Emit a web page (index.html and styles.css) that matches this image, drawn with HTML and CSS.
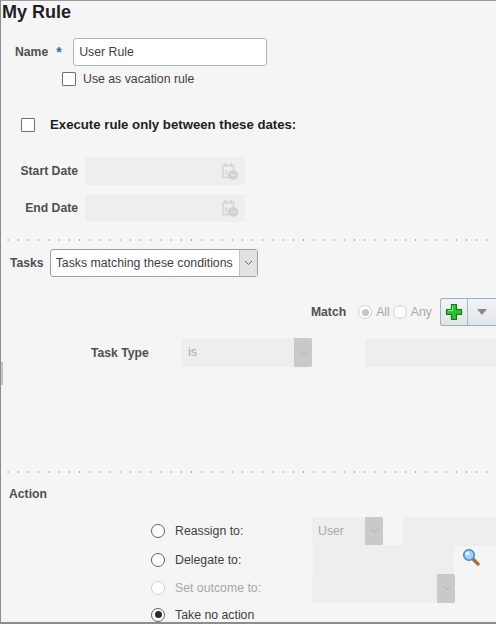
FILE: index.html
```html
<!DOCTYPE html>
<html lang="en">
<head>
    <meta charset="UTF-8">
    <meta name="viewport" content="width=device-width, initial-scale=1.0">
    <title>My Rule</title>
    <link rel="stylesheet" href="styles.css">
</head>
<body>
    <div class="frame">
        <div class="splitter-handle"></div>
        <h1>My Rule</h1>

        <div class="name-row">
            <label class="field-label" for="ruleName">Name</label>
            <span class="required">*</span>
            <input class="text-input" id="ruleName" type="text" value="User Rule">
        </div>
        <label class="vacation-row">
            <input type="checkbox" class="check">
            <span>Use as vacation rule</span>
        </label>

        <label class="dates-toggle">
            <input type="checkbox" class="check">
            <span>Execute rule only between these dates:</span>
        </label>

        <div class="date-row">
            <span class="field-label date-label">Start Date</span>
            <div class="date-input">
                <svg class="cal-icon" width="18" height="18" viewBox="0 0 18 18">
                    <path d="M2 3.500h10.500v6h-3a4 4 0 0 0-1.500 6H2z" fill="none" stroke="#d4d4d6" stroke-width="1.500"/>
                    <path d="M4.500 1v4M10 1v4" stroke="#d4d4d6" stroke-width="1.800"/>
                    <path d="M5 8v5" stroke="#d4d4d6" stroke-width="1.500"/>
                    <circle cx="12.500" cy="13" r="4.800" fill="#d2d2d4"/>
                    <path d="M10 12.500l2.800 1.200 2.400-1" fill="none" stroke="#eeeeef" stroke-width="1"/>
                </svg>
            </div>
        </div>
        <div class="date-row">
            <span class="field-label date-label">End Date</span>
            <div class="date-input">
                <svg class="cal-icon" width="18" height="18" viewBox="0 0 18 18">
                    <path d="M2 3.500h10.500v6h-3a4 4 0 0 0-1.500 6H2z" fill="none" stroke="#d4d4d6" stroke-width="1.500"/>
                    <path d="M4.500 1v4M10 1v4" stroke="#d4d4d6" stroke-width="1.800"/>
                    <path d="M5 8v5" stroke="#d4d4d6" stroke-width="1.500"/>
                    <circle cx="12.500" cy="13" r="4.800" fill="#d2d2d4"/>
                    <path d="M10 12.500l2.800 1.200 2.400-1" fill="none" stroke="#eeeeef" stroke-width="1"/>
                </svg>
            </div>
        </div>

        <div class="dots dots-tasks"></div>

        <div class="tasks-row">
            <span class="field-label">Tasks</span>
            <div class="select">
                <span class="select-text">Tasks matching these conditions</span>
                <span class="select-arrow">
                    <svg width="9" height="6" viewBox="0 0 9 6"><path d="M1 1l3.500 3.500L8 1" fill="none" stroke="#666" stroke-width="1"/></svg>
                </span>
            </div>
        </div>

        <div class="match-row">
            <span class="field-label">Match</span>
            <input type="radio" class="radio radio-off" name="match" checked disabled>
            <span class="muted">All</span>
            <input type="radio" class="radio radio-off" name="match" disabled>
            <span class="muted">Any</span>
            <div class="add-button">
                <span class="add-plus">
                    <svg width="18" height="18" viewBox="0 0 18 18">
                        <path d="M6.500 1.500h5v5h5v5h-5v5h-5v-5h-5v-5h5z" fill="#2fc12f" stroke="#0e7d14" stroke-width="1.200" stroke-linejoin="round"/>
                        <path d="M7.500 3v4.500H3" fill="none" stroke="#9cf09a" stroke-width="1"/>
                    </svg>
                </span>
                <span class="add-menu">
                    <svg width="10" height="6" viewBox="0 0 10 6"><path d="M0 0h10L5 6z" fill="#8a8a8a"/></svg>
                </span>
            </div>
        </div>

        <div class="condition-row">
            <span class="field-label condition-label">Task Type</span>
            <div class="disabled-select condition-select">
                <span>is</span>
                <span class="disabled-arrow">
                    <svg width="9" height="6" viewBox="0 0 9 6"><path d="M1 1l3.500 3.500L8 1" fill="none" stroke="#b0b0b0" stroke-width="1"/></svg>
                </span>
            </div>
            <div class="blank-input condition-value"></div>
        </div>

        <div class="dots dots-action"></div>

        <div class="field-label action-title">Action</div>

        <div class="action-grid">
            <label class="action-option">
                <input type="radio" class="radio" name="action">
                <span>Reassign to:</span>
            </label>
            <div class="action-controls">
                <div class="disabled-select user-select">
                    <span>User</span>
                    <span class="disabled-arrow">
                        <svg width="9" height="6" viewBox="0 0 9 6"><path d="M1 1l3.500 3.500L8 1" fill="none" stroke="#b0b0b0" stroke-width="1"/></svg>
                    </span>
                </div>
                <div class="blank-input user-value"></div>
            </div>

            <label class="action-option">
                <input type="radio" class="radio" name="action">
                <span>Delegate to:</span>
            </label>
            <div class="action-controls">
                <div class="blank-input delegate-value"></div>
                <svg class="search-icon" width="18" height="18" viewBox="0 0 18 18">
                    <path d="M10.500 10.500l5.500 5.500" stroke="#a8703f" stroke-width="3.400" stroke-linecap="round"/>
                    <circle cx="7" cy="7" r="5.300" fill="#a4d0f5" stroke="#3f88d0" stroke-width="1.500"/>
                    <circle cx="5.500" cy="5.500" r="2" fill="#e4f3ff"/>
                </svg>
            </div>

            <label class="action-option option-disabled">
                <input type="radio" class="radio radio-off" name="action" disabled>
                <span>Set outcome to:</span>
            </label>
            <div class="action-controls">
                <div class="disabled-select outcome-select">
                    <span></span>
                    <span class="disabled-arrow">
                        <svg width="9" height="6" viewBox="0 0 9 6"><path d="M1 1l3.500 3.500L8 1" fill="none" stroke="#b0b0b0" stroke-width="1"/></svg>
                    </span>
                </div>
            </div>

            <label class="action-option">
                <input type="radio" class="radio" name="action" checked>
                <span>Take no action</span>
            </label>
        </div>
    </div>
</body>
</html>
```

FILE: styles.css
```css
html, body {
    margin: 0;
    padding: 0;
}
body {
    font-family: "Liberation Sans", Arial, sans-serif;
    font-size: 12.3px;
    color: #3f3f3f;
    background-color: #f5f5f5;
}
.frame {
    position: relative;
    box-sizing: border-box;
    height: 624px;
    overflow: hidden;
    background: #f5f5f5;
    border-top: 1px solid #9c9c9c;
    border-left: 1px solid #8c8c8c;
    border-bottom: 2px solid #8c8c8c;
}
.splitter-handle {
    position: absolute;
    left: -1px;
    top: 361px;
    width: 3px;
    height: 23px;
    background: #b9c4cf;
}
h1 {
    margin: 0;
    padding-top: 1px;
    padding-left: 1px;
    font-size: 18px;
    line-height: 21px;
    color: #1f1f1f;
}
.field-label {
    font-weight: bold;
    font-size: 12.200px;
    color: #4f4f4f;
}
.muted {
    color: #a8a8a8;
}

/* name + vacation */
.name-row {
    display: flex;
    align-items: center;
    margin-top: 15px;
    padding-left: 14px;
}
.required {
    width: 17px;
    margin-left: 8px;
    font-size: 14px;
    font-weight: bold;
    color: #2d6ea8;
}
.text-input {
    box-sizing: border-box;
    width: 194px;
    height: 28px;
    padding: 0 5px;
    font: inherit;
    color: #3f3f3f;
    background: #fff;
    border: 1px solid #a9b8c8;
    border-radius: 3px;
}
.vacation-row {
    display: flex;
    align-items: center;
    gap: 7px;
    margin: 6px 0 0 61px;
    height: 14px;
}
.check {
    appearance: none;
    box-sizing: border-box;
    width: 14px;
    height: 14px;
    margin: 0;
    background: #fff;
    border: 1px solid #6f6f6f;
    border-radius: 1px;
}
.dates-toggle {
    display: flex;
    align-items: center;
    gap: 15px;
    margin: 32px 0 0 20px;
    height: 14px;
    font-size: 13.200px;
    font-weight: bold;
    color: #1f1f1f;
}
.dates-toggle span {
    margin-top: -2px;
}

/* dates */
.date-row {
    display: flex;
    align-items: center;
    gap: 7px;
    margin-bottom: 9px;
}
.dates-toggle + .date-row {
    margin-top: 25px;
}
.date-label {
    width: 77px;
    text-align: right;
}
.date-input {
    display: flex;
    align-items: center;
    justify-content: flex-end;
    box-sizing: border-box;
    width: 160px;
    height: 28px;
    padding-right: 6px;
    background: #eeeeef;
    border-radius: 2px;
}
.dots {
    height: 2px;
    margin-left: 2px;
    background-image: radial-gradient(circle, #a6a6a6 0.8px, transparent 1px);
    background-size: 10.200px 2px;
}
.dots-tasks {
    margin-top: 17px;
}

/* tasks */
.tasks-row {
    display: flex;
    align-items: center;
    gap: 6px;
    margin: 8px 0 0 9px;
}
.select {
    display: flex;
    box-sizing: border-box;
    width: 208px;
    height: 28px;
    background: #fff;
    border: 1px solid #8fa3b5;
    border-radius: 3px;
}
.select-text {
    flex: 1;
    padding-left: 5px;
    line-height: 26px;
}
.select-arrow {
    display: flex;
    align-items: center;
    justify-content: center;
    width: 17px;
    background: #e2e2e0;
    border-left: 1px solid #c4c4c4;
}
.match-row {
    display: flex;
    align-items: center;
    justify-content: flex-end;
    margin-top: 21px;
    height: 28px;
}
.match-row .field-label {
    margin-right: 12px;
}
.match-row .muted {
    margin-left: 4px;
    margin-right: 3px;
}
.match-row .muted:nth-of-type(3) {
    margin-right: 8px;
}
.add-button {
    display: flex;
    box-sizing: border-box;
    width: 56px;
    height: 28px;
    background: linear-gradient(#f2f4f6, #e1e5e9);
    border: 1px solid #9db1c4;
    border-right: 0;
    border-radius: 3px 0 0 3px;
}
.add-plus {
    display: flex;
    align-items: center;
    justify-content: center;
    width: 26px;
    border-right: 1px solid #a9b8c8;
}
.add-menu {
    display: flex;
    align-items: center;
    justify-content: center;
    flex: 1;
}
.radio {
    appearance: none;
    box-sizing: border-box;
    position: relative;
    flex: none;
    width: 14px;
    height: 14px;
    margin: 0;
    background: #fff;
    border: 1px solid #5f5f5f;
    border-radius: 50%;
}
.radio:checked::after {
    content: "";
    position: absolute;
    left: 2.500px;
    top: 2.500px;
    width: 7px;
    height: 7px;
    background: #2b2b2b;
    border-radius: 50%;
}
.radio-off {
    border-color: #cfcfcf;
}
.radio-off:checked::after {
    background: #c4c4c4;
}

/* condition */
.condition-row {
    display: flex;
    align-items: center;
    margin-top: 12px;
    height: 29px;
}
.condition-label {
    width: 91px;
    margin-left: 90px;
}
.disabled-select {
    display: flex;
    justify-content: space-between;
    box-sizing: border-box;
    height: 29px;
    padding-left: 6px;
    line-height: 28px;
    color: #a8a8a8;
    background: #eeeeef;
    border-radius: 2px;
}
.disabled-arrow {
    display: flex;
    align-items: center;
    justify-content: center;
    width: 18px;
    background: #c9c9c9;
    border-radius: 0 2px 2px 0;
}
.condition-select {
    width: 130px;
}
.blank-input {
    height: 29px;
    background: #eeeeef;
}
.condition-value {
    flex: 1;
    margin-left: 53px;
}
.dots-action {
    margin-top: 104px;
}

/* action */
.action-title {
    margin: 14px 0 0 8px;
    line-height: 14px;
}
.action-grid {
    display: grid;
    grid-template-columns: 161px 1fr;
    grid-template-rows: 28.500px 28.500px 28.500px 24px;
    margin: 16px 0 0 150px;
    align-items: center;
}
.action-option {
    display: flex;
    align-items: center;
    gap: 10px;
}
.option-disabled {
    color: #a8a8a8;
}
.action-controls {
    display: flex;
    align-items: center;
}
.user-select {
    width: 71px;
}
.user-value {
    flex: 1;
    margin-left: 19px;
}
.delegate-value {
    width: 141px;
    margin-left: 1px;
}
.search-icon {
    margin-left: 8px;
    margin-bottom: 5px;
}
.outcome-select {
    width: 143px;
}
```
